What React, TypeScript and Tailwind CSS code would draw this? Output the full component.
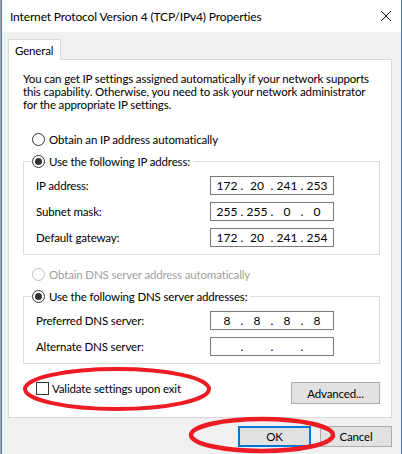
import React from "react";

function Radio({ checked, disabled }: { checked?: boolean; disabled?: boolean }) {
  return (
    <span
      className={`w-[13px] h-[13px] rounded-full border bg-white flex items-center justify-center shrink-0 ${
        disabled ? "border-[#bcbcbc]" : "border-[#333333]"
      }`}
    >
      {checked && <span className="w-[7px] h-[7px] rounded-full bg-[#333333]" />}
    </span>
  );
}

function IpBox({ parts }: { parts: string[] }) {
  return (
    <div className="w-[124px] h-[19px] border border-[#7a7a7a] bg-white flex items-center pl-[4px] text-[12px] leading-[17px] tracking-normal text-black">
      {parts.map((p, i) => (
        <React.Fragment key={i}>
          <span className="w-[24px] text-center">{p}</span>
          {i < 3 && <span className="w-[6px] text-center">.</span>}
        </React.Fragment>
      ))}
    </div>
  );
}

function IpRow({ label, parts }: { label: string; parts: string[] }) {
  return (
    <div className="flex items-center">
      <span className="w-[174px]">{label}</span>
      <IpBox parts={parts} />
    </div>
  );
}

export default function App() {
  return (
    <div className="relative w-[402px] h-[454px] overflow-hidden flex bg-white font-['Lato',sans-serif] text-[11.5px] tracking-[-0.15px] leading-[13px] text-black">
      {/* desktop sliver */}
      <div className="w-[1px] h-full bg-[#8fa6c0]" />

      <div className="w-[401px] h-full border-x border-[#2a86d4] flex flex-col">
        {/* Title bar */}
        <div className="h-[32px] bg-white flex items-center justify-between pl-[8px] pr-[9px]">
          <span className="text-[12px]">Internet Protocol Version 4 (TCP/IPv4) Properties</span>
          <svg width="12" height="12" viewBox="0 0 12 12">
            <path d="M1 1 L11 11 M11 1 L1 11" stroke="#111" strokeWidth="1" />
          </svg>
        </div>

        {/* Body */}
        <div className="flex-1 bg-[#f0f0f0] pt-[7px] pl-[6px]">
          <div className="relative z-10 w-[53px] h-[21px] bg-white border-t border-x border-[#d9d9d9] pl-[6px] flex items-center">
            General
          </div>

          <div className="-mt-[1px] w-[384px] h-[359px] bg-white border border-[#d9d9d9] pl-[14px] pr-[11px] pt-[12px] flex flex-col">
            <p className="whitespace-nowrap">
              You can get IP settings assigned automatically if your network supports
              <br />
              this capability. Otherwise, you need to ask your network administrator
              <br />
              for the appropriate IP settings.
            </p>

            <div className="mt-[22px] ml-[9px] h-[13px] flex items-center gap-[4px]">
              <Radio />
              <span>Obtain an IP address automatically</span>
            </div>

            <fieldset className="mt-[9px] border border-[#dcdcdc] pl-[12px] pr-[44px] pb-[7px]">
              <legend className="-ml-[4px] pr-[3px]">
                <span className="h-[13px] flex items-center gap-[4px]">
                  <Radio checked />
                  <span>Use the following IP address:</span>
                </span>
              </legend>
              <div className="pt-[8px] flex flex-col gap-[7px]">
                <IpRow label="IP address:" parts={["172", "20", "241", "253"]} />
                <IpRow label="Subnet mask:" parts={["255", "255", "0", "0"]} />
                <IpRow label="Default gateway:" parts={["172", "20", "241", "254"]} />
              </div>
            </fieldset>

            <div className="mt-[13px] ml-[9px] h-[13px] flex items-center gap-[4px] text-[#a0a0a0]">
              <Radio disabled />
              <span>Obtain DNS server address automatically</span>
            </div>

            <fieldset className="mt-[9px] border border-[#dcdcdc] pl-[12px] pr-[44px] pb-[7px]">
              <legend className="-ml-[4px] pr-[3px]">
                <span className="h-[13px] flex items-center gap-[4px]">
                  <Radio checked />
                  <span>Use the following DNS server addresses:</span>
                </span>
              </legend>
              <div className="pt-[8px] flex flex-col gap-[7px]">
                <IpRow label="Preferred DNS server:" parts={["8", "8", "8", "8"]} />
                <IpRow label="Alternate DNS server:" parts={["", "", "", ""]} />
              </div>
            </fieldset>

            <div className="mt-[18px] flex items-start justify-between">
              <div className="pl-[13px] h-[13px] flex items-center gap-[3px]">
                <span className="w-[13px] h-[13px] border border-[#333333] bg-white" />
                <span>Validate settings upon exit</span>
              </div>
              <button className="w-[89px] h-[22px] bg-[#e1e1e1] border border-[#adadad] flex items-center justify-center">
                Advanced...
              </button>
            </div>
          </div>

          <div className="mt-[8px] w-[384px] flex justify-end gap-[9px]">
            <button className="w-[73px] h-[21px] bg-[#e1e1e1] border-2 border-[#0078d7] flex items-center justify-center">
              OK
            </button>
            <button className="w-[72px] h-[21px] bg-[#e1e1e1] border border-[#adadad] flex items-center justify-center">
              Cancel
            </button>
          </div>
        </div>
      </div>

      {/* red annotation ellipses */}
      <svg className="absolute inset-0 pointer-events-none" width="402" height="454" viewBox="0 0 402 454">
        <ellipse cx="117" cy="389" rx="92" ry="20" fill="none" stroke="#ed1c24" strokeWidth="4" />
        <ellipse cx="262" cy="435" rx="71" ry="16" fill="none" stroke="#ed1c24" strokeWidth="4.5" />
      </svg>
    </div>
  );
}
